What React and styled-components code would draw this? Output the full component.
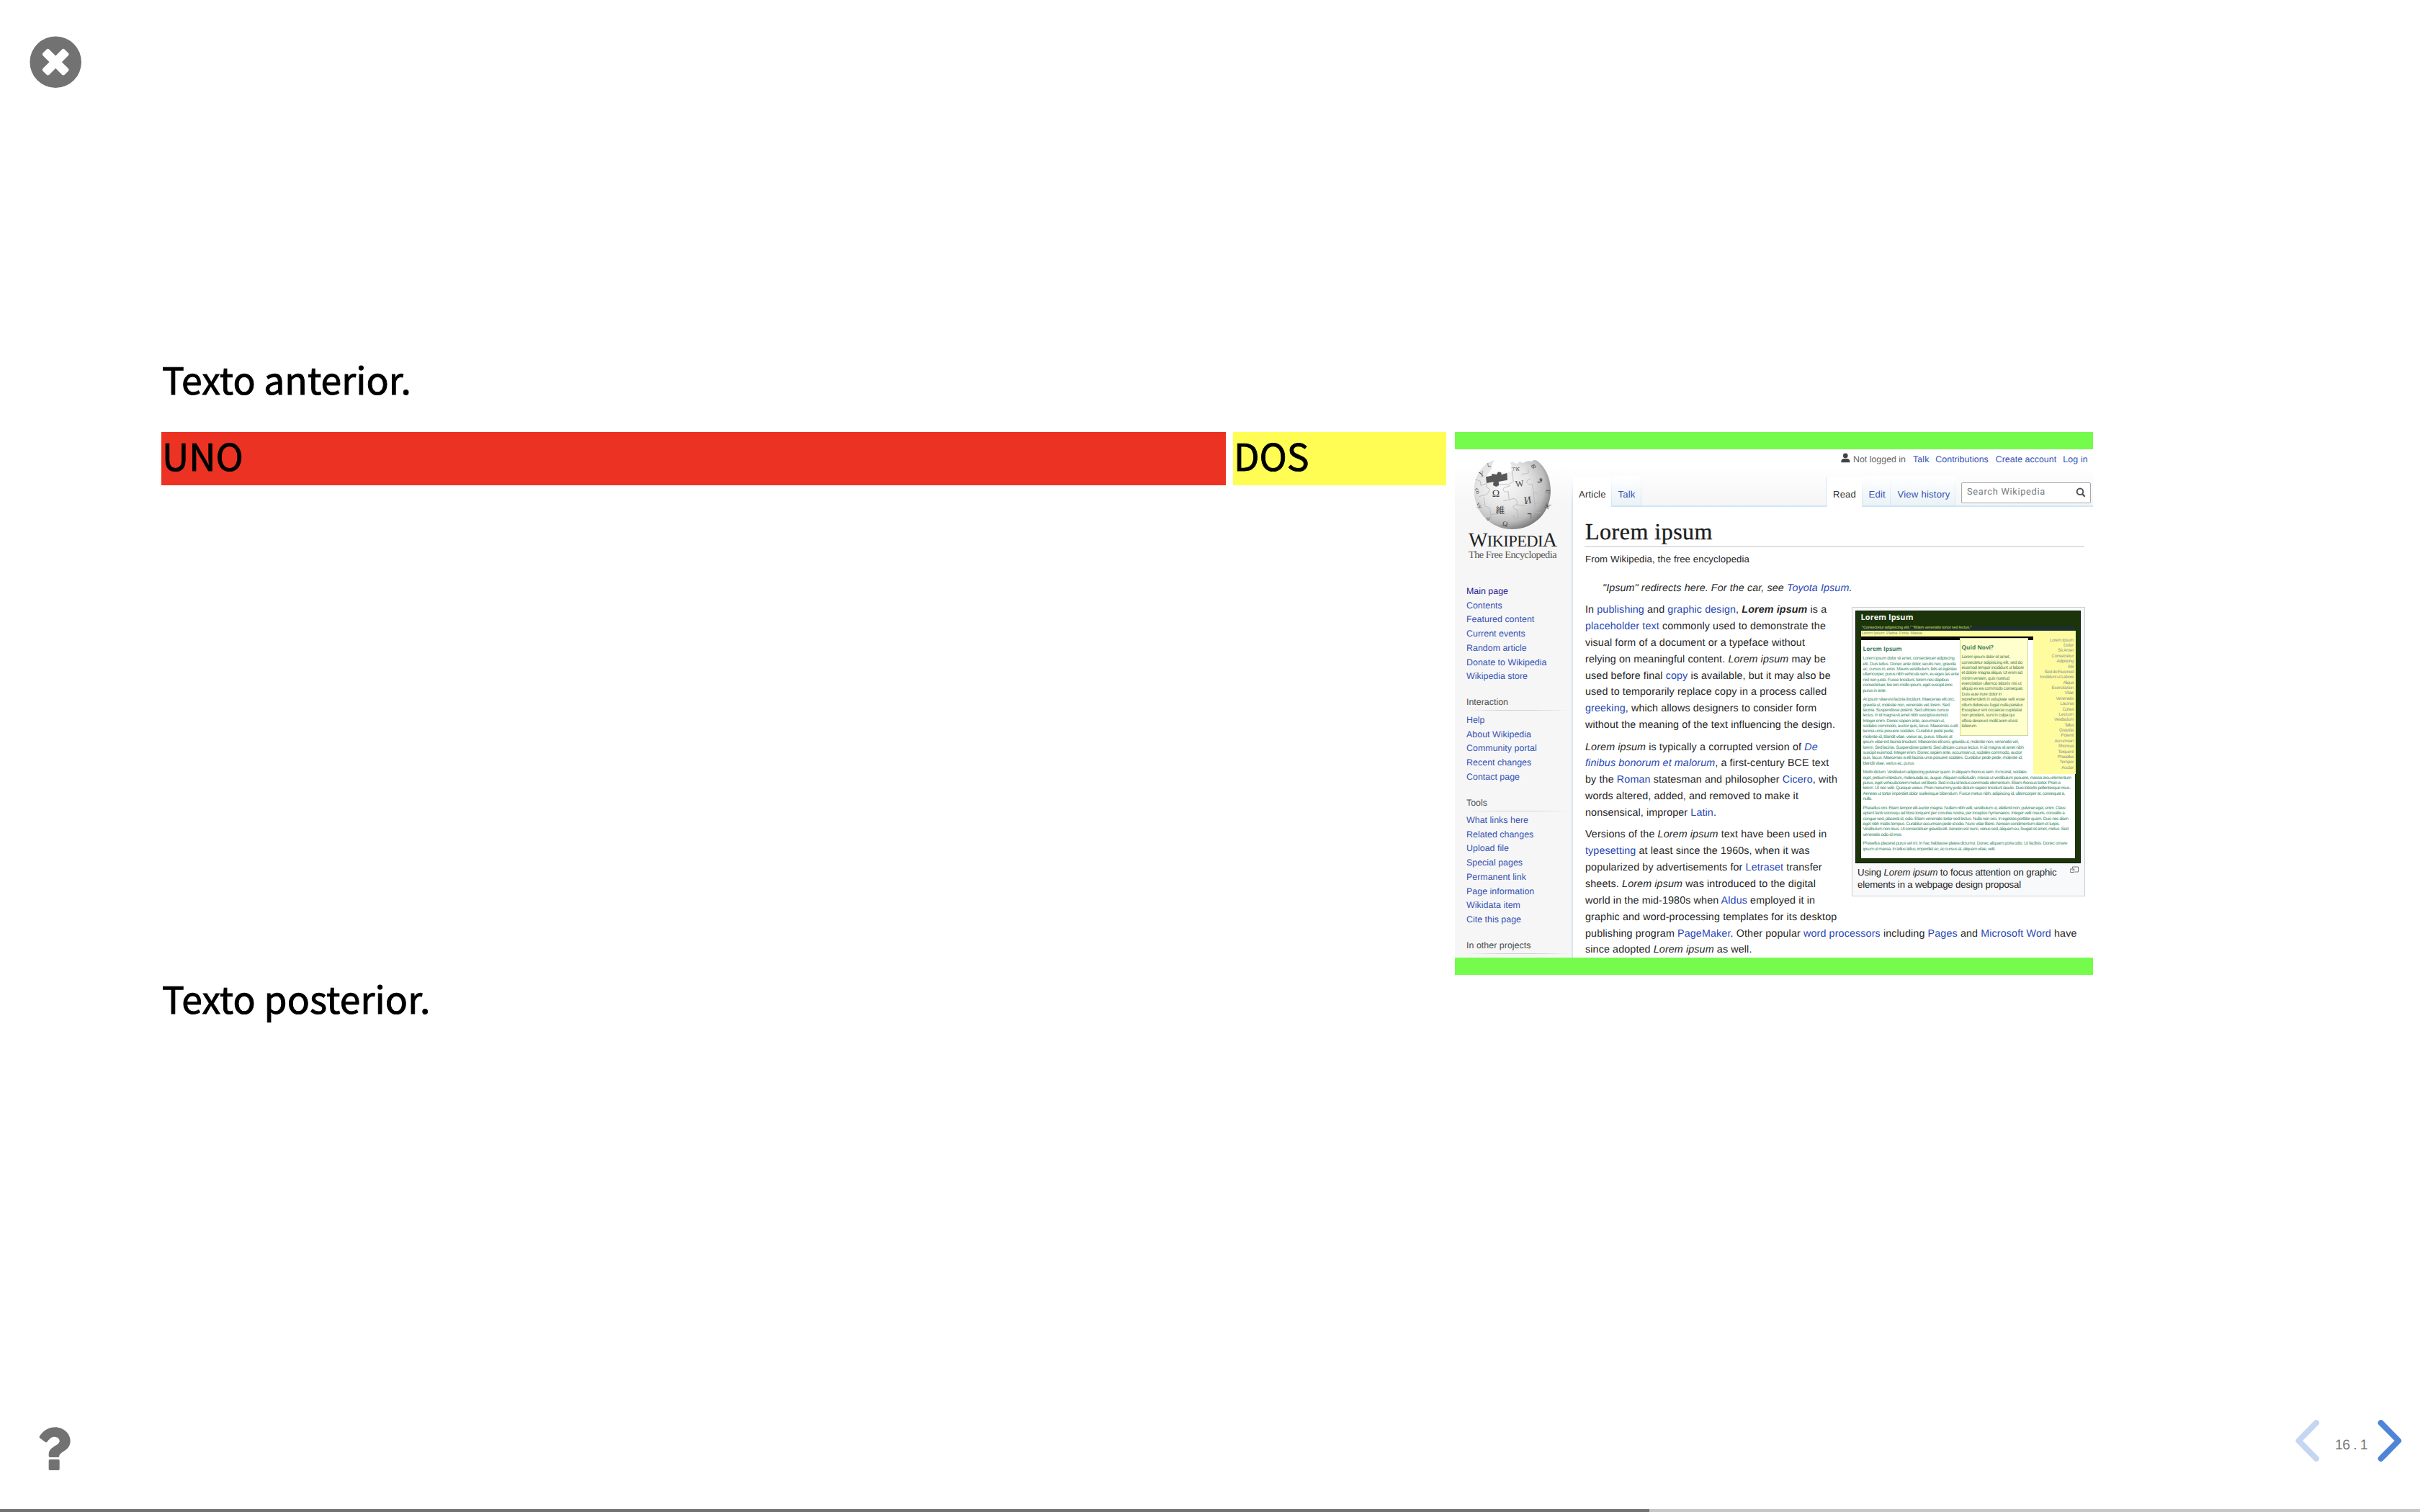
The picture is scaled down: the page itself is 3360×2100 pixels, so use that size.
import React, { useLayoutEffect, useRef, useState } from "react";
import styled, { createGlobalStyle, css } from "styled-components";

const Global = createGlobalStyle`
  * { box-sizing: border-box; }
  html, body { margin: 0; padding: 0; background: #fff; overflow: hidden; }
  body { text-rendering: geometricPrecision; }
`;

const sans = '"Liberation Sans", Arial, sans-serif';
const serif = '"Liberation Serif", "Times New Roman", serif';

/* ---------- a line of text tracked to a given measure ---------- */

const Tracked = styled.span`
  display: inline-block;
  white-space: pre;
`;

function Fit({ w, children }) {
  const ref = useRef(null);
  const [spacing, setSpacing] = useState(0);
  useLayoutEffect(() => {
    const el = ref.current;
    const natural = el.getBoundingClientRect().width;
    setSpacing((w - natural) / el.textContent.length);
  }, [w]);
  return (
    <Tracked ref={ref} style={{ letterSpacing: `${spacing}px` }}>
      {children}
    </Tracked>
  );
}

/* ---------- deck ---------- */

const Deck = styled.div`
  width: 3360px;
  height: 2100px;
  display: grid;
  grid-template-rows: 494px 1fr 140px 4px;
  background: #fff;
`;

const TopBar = styled.header`
  padding: 50px 0 0 41px;
`;

const Slide = styled.main`
  padding-left: 224px;
  font-family: "Noto Sans CJK JP", "Noto Sans CJK SC", sans-serif;
  font-size: 51.6px;
  color: #000;
  -webkit-text-stroke: 0.9px #000;
`;

const SlideText = styled.p`
  margin: 0 0 ${(p) => p.$gap || 0}px;
  height: 74px;
  padding-left: 1px;
  line-height: 64px;
`;

const Columns = styled.div`
  display: flex;
  align-items: flex-start;
`;

const Column = styled.div`
  width: ${(p) => p.$width}px;
  margin-right: ${(p) => p.$gap || 0}px;
  padding: ${(p) => p.$pad || 0}px 0;
  background: ${(p) => p.$color};
`;

const BottomBar = styled.footer`
  display: flex;
  justify-content: space-between;
  padding: 14.7px 24px 0 52px;
`;

const HelpButton = styled.div`
  padding-top: 5.3px;
`;

const Controls = styled.nav`
  display: flex;
  align-items: flex-start;
`;

const PageNumber = styled.div`
  width: 78px;
  padding: 24.3px 0 0 20px;
  font: 19.5px/24px ${sans};
  color: #757575;
`;

const Progress = styled.div`
  background: #c6c6c6;
`;

const ProgressFill = styled.div`
  width: 2290px;
  height: 4px;
  background: #727272;
`;

/* ---------- encyclopedia page ---------- */

const Page = styled.article`
  width: 886px;
  height: 706px;
  display: grid;
  grid-template-columns: 162px 724px;
  overflow: hidden;
  background: #fff;
  font-family: ${sans};
  color: #252525;
  -webkit-text-stroke: 0;
`;

const Side = styled.aside`
  background: linear-gradient(#fff 0, #fff 22px, #f6f6f6 79px);
  font-size: 12.4px;
`;

const Logo = styled.div`
  height: 152px;
  padding: 9.3px 0 0 19px;
  font-family: ${serif};
  color: #222;
  svg { display: block; margin-left: 1px; }
`;

const Wordmark = styled.div`
  height: 24px;
  margin-top: 3.2px;
  font-size: 22.5px;
  line-height: 24px;
  span b { font-weight: 400; font-size: 28px; }
`;

const Motto = styled.div`
  height: 16px;
  font-size: 14.3px;
  line-height: 16px;
  color: #555;
`;

const SideGroup = styled.div`
  padding: ${(p) => p.$top}px 0 0 16px;
`;

const SideTitle = styled.h3`
  width: 142px;
  height: 20.5px;
  margin: 0 0 ${(p) => p.$gap}px;
  font-size: 12.4px;
  font-weight: 400;
  line-height: 18px;
  color: #4d4d4d;
  border-bottom: 1.5px solid;
  border-image: linear-gradient(90deg, transparent, #d2d2d2 33%, #d2d2d2 66%, transparent) 1;
`;

const SideLink = styled.div`
  height: 19.77px;
  line-height: 19.77px;
  color: ${(p) => (p.$visited ? "#1d1993" : "#3552b5")};
`;

const Main = styled.section`
  border-left: 2px solid;
  border-image: linear-gradient(#fff 38px, #d3e6f6 76px) 1;
`;

const Head = styled.div`
  height: 80px;
  display: flex;
  flex-direction: column;
  justify-content: space-between;
  background: linear-gradient(#fff 0, #fff 24px, #f5f5f5 79px);
`;

const Personal = styled.div`
  display: flex;
  padding: 5.4px 0 0 372px;
  height: 26px;
  font-size: 12.4px;
  line-height: 18px;
  color: #666;
`;

const PersonalItem = styled.span`
  width: ${(p) => p.$width}px;
  color: ${(p) => (p.$link ? "#3552b5" : "#666")};
`;

const Tabs = styled.div`
  height: 42px;
  display: flex;
`;

const Tab = styled.div`
  width: ${(p) => p.$width}px;
  padding-left: ${(p) => p.$pad}px;
  font-size: 13.1px;
  line-height: 50px;
  height: 42px;
  color: #3552b5;
  border-right: 1.5px solid;
  border-image: linear-gradient(#fff, #d0e6f6 80%) 1;
  background:
    linear-gradient(#cfe4f5, #cfe4f5) bottom / 100% 2px no-repeat,
    linear-gradient(#fff, #e9f2f7);
  ${(p) => p.$active && css`
    color: #333;
    background: #fff;
  `}
`;

const TabGap = styled.div`
  width: ${(p) => p.$width}px;
  padding: 7.7px 0 0 8px;
  border-bottom: 2px solid #d3e6f6;
  ${(p) => p.$edge && css`
    border-right: 1.5px solid #d8e8f4;
  `}
`;

const Search = styled.div`
  width: 180px;
  height: 29px;
  display: flex;
  align-items: center;
  justify-content: space-between;
  padding: 0 6px 0 7px;
  border: 1px solid #a5a8ad;
  border-radius: 2px;
  background: #fff;
  font: 12.8px/26px Roboto, ${sans};
  color: #777b80;
`;

const Content = styled.div`
  padding-left: 16px;
`;

const Title = styled.h1`
  width: 694px;
  height: 56px;
  margin: 0 0 5.7px;
  padding: 15.8px 0 0 1px;
  border-bottom: 1.5px solid #c2c5cb;
  font: 400 32px/36px ${serif};
  color: #1c1c1c;
  -webkit-text-stroke: 0.35px #1c1c1c;
`;

const Tagline = styled.div`
  padding-left: 1px;
  height: 22px;
  font-size: 13.2px;
  line-height: 22px;
`;

const Redirect = styled.div`
  height: 23px;
  margin-top: 18.3px;
  padding-left: 25px;
  font-size: 14.3px;
  font-style: italic;
  line-height: 23px;
`;

const Article = styled.div`
  display: flex;
  margin-top: 7.2px;
`;

const Copy = styled.div`
  width: 371px;
  padding-left: 1px;
  font-size: 14.3px;
`;

const Paragraph = styled.div`
  margin-bottom: 7.5px;
`;

const TextLine = styled.div`
  height: 22.86px;
  line-height: 22.86px;
`;

const Link = styled.span`
  color: #2747b5;
`;

const Thumb = styled.figure`
  width: 323.5px;
  height: 401.5px;
  margin: 7px 0 0;
  padding: 4px;
  border: 1.3px solid #ccd0d5;
  background: #f8f9fa;
  font-size: 13.2px;
`;

const Caption = styled.figcaption`
  display: flex;
  justify-content: space-between;
  padding: 4px 4px 0 3px;
  line-height: 17.7px;
`;

const Icon = styled.svg`
  display: block;
  flex: none;
`;

/* ---------- web page mock-up inside the figure ---------- */

const Mock = styled.div`
  position: relative;
  width: 312.5px;
  height: 350.5px;
  padding: 0 6.5px;
  border: 1.5px solid #10190d;
  background: #1b3409;
  font-size: 6.3px;
`;

const MockTitle = styled.div`
  height: 21px;
  font: 700 11px/18px "Open Sans", ${sans};
  color: #f3f3f3;
`;

const MockQuote = styled.div`
  height: 6px;
  padding-left: 1px;
  font-weight: 700;
  font-size: 5.4px;
  line-height: 5px;
  color: #a5b832;
  background: #1c3033;
`;

const MockNav = styled.div`
  height: 8px;
  padding-left: 1px;
  font-size: 6px;
  line-height: 8px;
  color: #82977d;
  background: #fffca0;
`;

const MockBar = styled.div`
  width: 239px;
  height: 4.5px;
  background: #0a0a04;
`;

const MockBody = styled.div`
  height: 303.5px;
  padding: 7px 0 0 3px;
  background: #fff;
  color: #3c8c68;
`;

const MockHeading = styled.div`
  font: 700 8.2px/11px "Open Sans", ${sans};
  color: #3f805f;
  margin-bottom: ${(p) => p.$gap}px;
`;

const MockLine = styled.div`
  height: 7.39px;
  line-height: 7.39px;
`;

const MockParagraph = styled.div`
  margin-bottom: 5.25px;
`;

const Quid = styled.div`
  position: absolute;
  left: 143.5px;
  top: 37px;
  width: 95.5px;
  height: 135.5px;
  padding: 7px 0 0 2px;
  border: 1px solid #ccd6a0;
  background: #ffffce;
  color: #52835a;
`;

const MockMenu = styled.div`
  position: absolute;
  right: 5.5px;
  top: 27px;
  width: 59.5px;
  height: 198.5px;
  padding: 9.5px 3px 0 0;
  background: #fffca0;
  color: #8b9595;
  text-align: right;
`;

/* ---------- content ---------- */

const sideMain = [
  ["Main page", 58], ["Contents", 49.7], ["Featured content", 94.3], ["Current events", 81.7],
  ["Random article", 83.7], ["Donate to Wikipedia", 111.5], ["Wikipedia store", 85],
];
const sideInteraction = [
  ["Help", 25.5], ["About Wikipedia", 90], ["Community portal", 97.7], ["Recent changes", 90.3], ["Contact page", 74],
];
const sideTools = [
  ["What links here", 86], ["Related changes", 93.3], ["Upload file", 59], ["Special pages", 78],
  ["Permanent link", 83], ["Page information", 94.3], ["Wikidata item", 75], ["Cite this page", 76],
];

const L = Link;
const paragraphs = [
  [
    [335.3, <>In <L>publishing</L> and <L>graphic design</L>, <b><i>Lorem ipsum</i></b> is a</>],
    [334, <><L>placeholder text</L> commonly used to demonstrate the</>],
    [305, <>visual form of a document or a typeface without</>],
    [334, <>relying on meaningful content. <i>Lorem ipsum</i> may be</>],
    [340.7, <>used before final <L>copy</L> is available, but it may also be</>],
    [335.3, <>used to temporarily replace copy in a process called</>],
    [321.3, <><L>greeking</L>, which allows designers to consider form</>],
    [347, <>without the meaning of the text influencing the design.</>],
  ],
  [
    [322.7, <><i>Lorem ipsum</i> is typically a corrupted version of <L><i>De</i></L></>],
    [338.3, <><L><i>finibus bonorum et malorum</i></L>, a first-century BCE text</>],
    [350, <>by the <L>Roman</L> statesman and philosopher <L>Cicero</L>, with</>],
    [296, <>words altered, added, and removed to make it</>],
    [182, <>nonsensical, improper <L>Latin</L>.</>],
  ],
  [
    [335.3, <>Versions of the <i>Lorem ipsum</i> text have been used in</>],
    [311.7, <><L>typesetting</L> at least since the 1960s, when it was</>],
    [328.7, <>popularized by advertisements for <L>Letraset</L> transfer</>],
    [320, <>sheets. <i>Lorem ipsum</i> was introduced to the digital</>],
    [319, <>world in the mid-1980s when <L>Aldus</L> employed it in</>],
    [349.3, <>graphic and word-processing templates for its desktop</>],
    [682.6, <>publishing program <L>PageMaker</L>. Other popular <L>word processors</L> including <L>Pages</L> and <L>Microsoft Word</L> have</>],
    [231.5, <>since adopted <i>Lorem ipsum</i> as well.</>],
  ],
];

const mockParagraphs = [
  [
    [127, "Lorem ipsum dolor sit amet, consectetuer adipiscing"],
    [129, "elit. Duis tellus. Donec ante dolor, iaculis nec, gravida"],
    [130, "ac, cursus in, eros. Mauris vestibulum, felis et egestas"],
    [133, "ullamcorper, purus nibh vehicula sem, eu eges tas ante"],
    [119, "nisl non justo. Fusce tincidunt, lorem nec dapibus"],
    [124, "consectetuer, leo orci mollis ipsum, eget suscipit eros"],
    [32.5, "purus in ante."],
  ],
  [
    [127, "At ipsum vitae est lacinia tincidunt. Maecenas elit orci,"],
    [120, "gravida ut, molestie non, venenatis vel, lorem. Sed"],
    [119, "lacinia. Suspendisse potenti. Sed ultricies cursus"],
    [118.5, "lectus. In id magna sit amet nibh suscipit euismod."],
    [113.5, "Integer enim. Donec sapien ante, accumsan ut,"],
    [132, "sodales commodo, auctor quis, lacus. Maecenas a elit"],
    [126.5, "lacinia urna posuere sodales. Curabitur pede pede,"],
    [124, "molestie id, blandit vitae, varius ac, purus. Mauris at"],
    [216, "ipsum vitae est lacinia tincidunt. Maecenas elit orci, gravida ut, molestie non, venenatis vel,"],
    [223, "lorem. Sed lacinia. Suspendisse potenti. Sed ultricies cursus lectus. In id magna sit amet nibh"],
    [220.5, "suscipit euismod. Integer enim. Donec sapien ante, accumsan ut, sodales commodo, auctor"],
    [221.5, "quis, lacus. Maecenas a elit lacinia urna posuere sodales. Curabitur pede pede, molestie id,"],
    [72, "blandit vitae, varius ac, purus."],
  ],
  [
    [227, "Morbi dictum. Vestibulum adipiscing pulvinar quam. In aliquam rhoncus sem. In mi erat, sodales"],
    [289, "eget, pretium interdum, malesuada ac, augue. Aliquam sollicitudin, massa ut vestibulum posuere, massa arcu elementum"],
    [274, "purus, eget vehicula lorem metus vel libero. Sed in dui id lectus commodo elementum. Etiam rhoncus tortor. Proin a"],
    [288, "lorem. Ut nec velit. Quisque varius. Proin nonummy justo dictum sapien tincidunt iaculis. Duis lobortis pellentesque risus."],
    [280.5, "Aenean ut tortor imperdiet dolor scelerisque bibendum. Fusce metus nibh, adipiscing id, ullamcorper at, consequat a,"],
    [12.5, "nulla."],
  ],
  [
    [281, "Phasellus orci. Etiam tempor elit auctor magna. Nullam nibh velit, vestibulum ut, eleifend non, pulvinar eget, enim. Class"],
    [280, "aptent taciti sociosqu ad litora torquent per conubia nostra, per inceptos hymenaeos. Integer velit mauris, convallis a"],
    [285, "congue sed, placerat id, odio. Etiam venenatis tortor sed lectus. Nulla non orci. In egestas porttitor quam. Duis nec diam"],
    [273, "eget nibh mattis tempus. Curabitur accumsan pede id odio. Nunc vitae libero. Aenean condimentum diam et turpis."],
    [285, "Vestibulum non risus. Ut consectetuer gravida elit. Aenean est nunc, varius sed, aliquam eu, feugiat sit amet, metus. Sed"],
    [54.5, "venenatis odio id eros."],
  ],
  [
    [283.5, "Phasellus placerat purus vel mi. In hac habitasse platea dictumst. Donec aliquam porta odio. Ut facilisis. Donec ornare"],
    [184, "ipsum ut massa. In tellus tellus, imperdiet ac, ac cursus at, aliquam vitae, velit."],
  ],
];

const quidLines = [
  [67, "Lorem ipsum dolor sit amet,"], [84.5, "consectetur adipisicing elit, sed do"],
  [86.5, "eiusmod tempor incididunt ut labore"], [84, "et dolore magna aliqua. Ut enim ad"],
  [66, "minim veniam, quis nostrud"], [83, "exercitation ullamco laboris nisi ut"],
  [85.5, "aliquip ex ea commodo consequat."], [55.5, "Duis aute irure dolor in"],
  [87.5, "reprehenderit in voluptate velit esse"], [85.5, "cillum dolore eu fugiat nulla pariatur."],
  [83.5, "Excepteur sint occaecat cupidatat"], [73.5, "non proident, sunt in culpa qui"],
  [77.5, "officia deserunt mollit anim id est"], [21.5, "laborum."],
];

const menuItems = [
  ["Lorem Ipsum", 33], ["Dolor", 14], ["Sit Amet", 22], ["Consectetur", 30.5], ["Adipiscing", 23.5], ["Elit", 7.5],
  ["Sed do Eiusmod", 40.5], ["Incididunt ut Labore", 47], ["Aliqua", 14.5], ["Exercitation", 30.5], ["Vitae", 12.5],
  ["Venenatis", 24.5], ["Lacinia", 18.5], ["Cursus", 15.5], ["Lectum", 20.5], ["Vestibulum", 27], ["Tellus", 12.5],
  ["Gravida", 20], ["Potenti", 17.5], ["Accumsan", 26.5], ["Rhoncus", 21], ["Torquent", 21.5], ["Phasellus", 22.5],
  ["Tempor", 19.5], ["Auctor", 17],
];

/* ---------- drawings ---------- */

const CloseIcon = () => (
  <Icon width="73" height="73" viewBox="41 50 73 73">
    <circle cx="77.2" cy="86.2" r="35.8" fill="#727272" />
    <g fill="#fff" transform="rotate(45 77.2 86.2)">
      <rect x="55.9" y="80.05" width="42.6" height="12.3" rx="3" />
      <rect x="71.05" y="64.9" width="12.3" height="42.6" rx="3" />
    </g>
  </Icon>
);

const HelpIcon = () => (
  <Icon width="48" height="66" viewBox="156 108 144 198">
    <g fill="#727272">
      <path d="M164 166 C180 141 200 127 231 127 C262 127 293 152 293 184 C293 225 249 228 247 247 Q247 252 242 252 H208 Q203 252 203 247 V241 C203 206 248 205 248 184 C248 174 238 167.500 226 167.500 C213 167.500 207 175 196 188 Q193 191.500 189 189 L166 171.500 Q163 169 164 166Z" />
      <rect x="203" y="261" width="45" height="45" rx="5" />
    </g>
  </Icon>
);

const Arrow = ({ right }) => (
  <Icon width="36" height="60" viewBox={right ? "480 92 108 180" : "138 92 108 180"}>
    <path
      d={right ? "M497 107.500 L570.500 182 L497 256.500" : "M228 107.500 L154.500 182 L228 256.500"}
      fill="none" stroke={right ? "#4f85d9" : "#c5d6f3"} strokeWidth="24"
      strokeLinecap="round" strokeLinejoin="round"
    />
  </Icon>
);

const Globe = () => (
  <Icon width="120" height="103" viewBox="120 130 360 309">
    <defs>
      <radialGradient id="ball" cx="0.38" cy="0.36" r="0.68">
        <stop offset="0" stopColor="#fafafa" />
        <stop offset="0.5" stopColor="#e4e4e4" />
        <stop offset="0.8" stopColor="#bdbdbd" />
        <stop offset="1" stopColor="#777" />
      </radialGradient>
    </defs>
    <path
      d="M224 148 L205 156 C164 178 140 224 140 274 C140 366 210 436 299 436 C390 436 459 366 459 276 C459 220 436 176 402 150 L390 147 L381 153 L364 152 L342 160 L330 154 L320 163 L308 160 L300 154 L290 160 L296 170 L291 181 L298 192 L278 202 L250 205 L218 212 L190 222 L197 206 L212 186 L216 164Z"
      fill="url(#ball)"
    />
    <path d="M189 218 L213 213 L214 205 L234 208 L240 197 L253 200 L254 209 L277 202 L279 231 L242 238 L244 253 L232 259 L219 253 L221 239 L192 244Z" fill="#585858" />
    <g fill="none" stroke="#b4b4b4" strokeWidth="2.500">
      <path d="M144 228 L166 236 L168 254 L190 246" />
      <path d="M192 244 L194 262 L205 270 L199 284 L190 292 L160 300" />
      <path d="M244 250 L282 248 L288 256 L266 262 C256 270 266 288 282 278 L286 314 L262 318" />
      <path d="M298 192 L304 236 L286 248 M338 210 C348 200 372 208 366 196 L364 184" />
      <path d="M376 228 C350 226 358 256 382 248 L388 284 L404 286" />
      <path d="M286 314 C314 300 322 316 318 334 C300 334 296 352 320 356 L322 388 C310 396 300 384 306 376" />
      <path d="M180 304 L186 340 L206 348 L208 374 L240 372 M208 374 L214 402 L252 408" />
      <path d="M318 334 L352 338 M388 284 L392 330 L420 322 M392 330 L394 366 L418 368 M320 388 L360 392 L380 378" />
    </g>
    <g fill="#454545" fontFamily={serif}>
      <text x="312" y="258" fontSize="37" transform="rotate(-7 332 246)">W</text>
      <text x="215" y="301" fontSize="42">Ω</text>
      <text x="348" y="329" fontSize="42" transform="rotate(-8 366 314)">И</text>
      <text x="230" y="370" fontSize="38" fontFamily="'Noto Sans CJK JP', sans-serif">維</text>
      <text x="362" y="390" fontSize="38">ר</text>
      <text x="412" y="236" fontSize="36" transform="rotate(18 422 222)">و</text>
      <text x="300" y="192" fontSize="26">איו</text>
      <text x="378" y="184" fontSize="26" transform="rotate(15 390 174)">Ф</text>
      <text x="162" y="216" fontSize="30" transform="rotate(-20 172 210)">Y</text>
      <text x="150" y="284" fontSize="25" transform="rotate(75 158 272)">co</text>
      <text x="152" y="346" fontSize="25" transform="rotate(60 164 336)">vy</text>
      <text x="258" y="424" fontSize="30" transform="rotate(10 272 414)">Ω</text>
      <text x="432" y="354" fontSize="25" transform="rotate(-65 440 342)">Җ</text>
      <text x="434" y="290" fontSize="25" transform="rotate(-80 444 278)">Л</text>
      <text x="192" y="400" fontSize="25" transform="rotate(45 200 394)">ა</text>
      <text x="192" y="174" fontSize="25" transform="rotate(-35 204 164)">ζ</text>
    </g>
  </Icon>
);

const UserIcon = () => (
  <Icon width="13" height="14" viewBox="0 0 13 14">
    <circle cx="6.300" cy="3.900" r="3.300" fill="#414447" />
    <path d="M0.400 13.200 V11.500 C0.400 9 2.500 8 4 7.900 H8.600 C10.200 8 12.400 9 12.400 11.500 V13.200Z" fill="#414447" />
  </Icon>
);

const SearchIcon = () => (
  <Icon width="14" height="14" viewBox="0 0 14 14">
    <circle cx="6" cy="5.800" r="4.300" fill="none" stroke="#4c4f55" strokeWidth="1.900" />
    <path d="M9 9 L12.700 12.700" stroke="#4c4f55" strokeWidth="2.300" />
  </Icon>
);

const EnlargeIcon = () => (
  <Icon width="12" height="11" viewBox="0 0 12 11">
    <path d="M3.500 3 V1 H11.500 V8 H7" fill="none" stroke="#777" />
    <rect x="0.700" y="4" width="5" height="4.500" fill="#fff" stroke="#777" />
    <path d="M3 6 L5.500 3.500" stroke="#999" />
  </Icon>
);

/* ---------- composition ---------- */

const SideLinks = ({ items }) =>
  items.map(([label, w]) => (
    <SideLink key={label} $visited={label === "Main page"}>
      <Fit w={w}>{label}</Fit>
    </SideLink>
  ));

const Sidebar = () => (
  <Side>
    <Logo>
      <Globe />
      <Wordmark><Fit w={122.5}><b>W</b>IKIPEDI<b>A</b></Fit></Wordmark>
      <Motto><Fit w={122}>The Free Encyclopedia</Fit></Motto>
    </Logo>
    <SideGroup $top={35.9}><SideLinks items={sideMain} /></SideGroup>
    <SideGroup $top={16}>
      <SideTitle $gap={4.2}><Fit w={58}>Interaction</Fit></SideTitle>
      <SideLinks items={sideInteraction} />
    </SideGroup>
    <SideGroup $top={16.7}>
      <SideTitle $gap={2.8}><Fit w={29}>Tools</Fit></SideTitle>
      <SideLinks items={sideTools} />
    </SideGroup>
    <SideGroup $top={16.2}>
      <SideTitle $gap={0}><Fit w={89.5}>In other projects</Fit></SideTitle>
    </SideGroup>
  </Side>
);

const MockPage = () => (
  <Mock>
    <MockTitle><Fit w={73}>Lorem Ipsum</Fit></MockTitle>
    <MockQuote><Fit w={153}>“Consectetur adipisicing elit.” “Etiam venenatis tortor sed lectus.”</Fit></MockQuote>
    <MockNav><Fit w={84}>Lorem Ipsum  Platea  Porta  Massa</Fit></MockNav>
    <MockBar />
    <MockBody>
      <MockHeading $gap={4.7}><Fit w={54}>Lorem Ipsum</Fit></MockHeading>
      {mockParagraphs.map((lines, i) => (
        <MockParagraph key={i}>
          {lines.map(([w, text]) => <MockLine key={text}><Fit w={w}>{text}</Fit></MockLine>)}
        </MockParagraph>
      ))}
    </MockBody>
    <Quid>
      <MockHeading $gap={4}><Fit w={44.5}>Quid Novi?</Fit></MockHeading>
      {quidLines.map(([w, text]) => <MockLine key={text}><Fit w={w}>{text}</Fit></MockLine>)}
    </Quid>
    <MockMenu>
      {menuItems.map(([text, w]) => <MockLine key={text}><Fit w={w}>{text}</Fit></MockLine>)}
    </MockMenu>
  </Mock>
);

const Encyclopedia = () => (
  <Page>
    <Sidebar />
    <Main>
      <Head>
        <Personal>
          <PersonalItem $width={17}><UserIcon /></PersonalItem>
          <PersonalItem $width={83}><Fit w={73}>Not logged in</Fit></PersonalItem>
          <PersonalItem $width={31.3} $link><Fit w={22.5}>Talk</Fit></PersonalItem>
          <PersonalItem $width={83.4} $link><Fit w={73.5}>Contributions</Fit></PersonalItem>
          <PersonalItem $width={93.6} $link><Fit w={84.5}>Create account</Fit></PersonalItem>
          <PersonalItem $width={35} $link><Fit w={34.5}>Log in</Fit></PersonalItem>
        </Personal>
        <Tabs>
          <Tab $width={53.5} $pad={8} $active><Fit w={37.7}>Article</Fit></Tab>
          <Tab $width={41} $pad={9}><Fit w={24}>Talk</Fit></Tab>
          <TabGap $width={258.5} $edge />
          <Tab $width={48.5} $pad={8} $active><Fit w={32}>Read</Fit></Tab>
          <Tab $width={39.5} $pad={9}><Fit w={23.3}>Edit</Fit></Tab>
          <Tab $width={90} $pad={9.5}><Fit w={73}>View history</Fit></Tab>
          <TabGap $width={191}>
            <Search><Fit w={109}>Search Wikipedia</Fit><SearchIcon /></Search>
          </TabGap>
        </Tabs>
      </Head>
      <Content>
        <Title><Fit w={177}>Lorem ipsum</Fit></Title>
        <Tagline><Fit w={228}>From Wikipedia, the free encyclopedia</Fit></Tagline>
        <Redirect><Fit w={346.5}>"Ipsum" redirects here. For the car, see <L>Toyota Ipsum</L>.</Fit></Redirect>
        <Article>
          <Copy>
            {paragraphs.map((lines, i) => (
              <Paragraph key={i}>
                {lines.map(([w, node], j) => <TextLine key={j}><Fit w={w}>{node}</Fit></TextLine>)}
              </Paragraph>
            ))}
          </Copy>
          <Thumb>
            <MockPage />
            <Caption>
              <div>
                <Fit w={276.5}>Using <i>Lorem ipsum</i> to focus attention on graphic</Fit>
                <br />
                <Fit w={227}>elements in a webpage design proposal</Fit>
              </div>
              <EnlargeIcon />
            </Caption>
          </Thumb>
        </Article>
      </Content>
    </Main>
  </Page>
);

export default function App() {
  return (
    <>
      <Global />
      <Deck>
        <TopBar><CloseIcon /></TopBar>
        <Slide>
          <SlideText $gap={32}><Fit w={346}>Texto anterior.</Fit></SlideText>
          <Columns>
            <Column $width={1478} $gap={10} $color="#ec3323"><SlideText>UNO</SlideText></Column>
            <Column $width={296} $gap={12} $color="#fffd54"><SlideText>DOS</SlideText></Column>
            <Column $width={886} $pad={24} $color="#75fb4c"><Encyclopedia /></Column>
          </Columns>
          <SlideText><Fit w={372.5}>Texto posterior.</Fit></SlideText>
        </Slide>
        <BottomBar>
          <HelpButton><HelpIcon /></HelpButton>
          <Controls>
            <Arrow />
            <PageNumber><Fit w={45}>16 . 1</Fit></PageNumber>
            <Arrow right />
          </Controls>
        </BottomBar>
        <Progress><ProgressFill /></Progress>
      </Deck>
    </>
  );
}
